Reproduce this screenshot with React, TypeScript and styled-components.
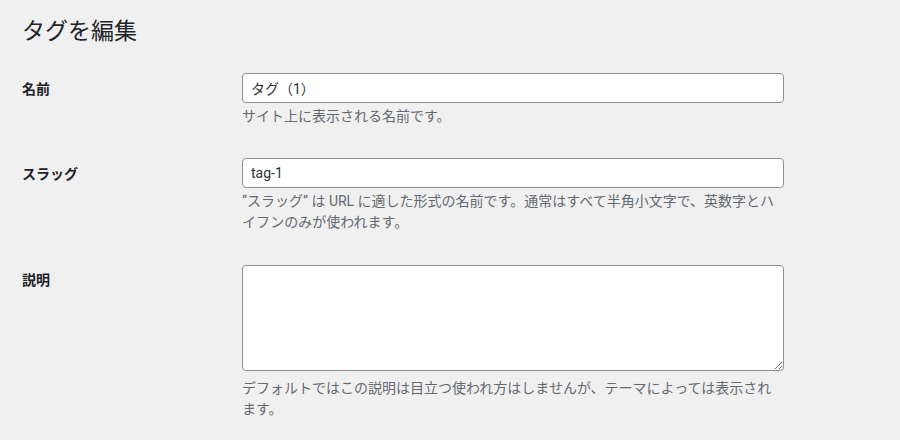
import React from "react";
import styled, { createGlobalStyle } from "styled-components";

const GlobalStyle = createGlobalStyle`
  html, body {
    margin: 0;
    padding: 0;
    background: #f0f0f1;
  }
  body {
    font-family: Roboto, "Noto Sans CJK JP", sans-serif;
    color: #3c434a;
    font-size: 13px;
  }
`;

const Wrap = styled.div`
  padding: 17px 20px 0 22px;
`;

const Title = styled.h1`
  margin: 0;
  font-size: 23px;
  font-weight: 400;
  line-height: 30px;
  color: #1d2327;
  font-family: Roboto, "Noto Sans CJK JP", sans-serif;
`;

const FormTable = styled.div`
  margin-top: 11px;
  display: flex;
  flex-direction: column;
`;

const Row = styled.div`
  display: grid;
  grid-template-columns: 210px 1fr;
  align-items: start;
`;

const Label = styled.label`
  display: block;
  padding: 22px 10px 0 0;
  font-size: 14px;
  line-height: 1.3;
  font-weight: 700;
  color: #1d2327;
`;

const Field = styled.div`
  padding: 15px 10px 16px 10px;
`;

const TextInput = styled.input`
  display: block;
  box-sizing: border-box;
  width: 542px;
  height: 30px;
  margin: 0;
  padding: 0 8px;
  border: 1px solid #8c8f94;
  border-radius: 4px;
  background: #fff;
  color: #2c3338;
  font-size: 14px;
  font-family: Roboto, "Noto Sans CJK JP", sans-serif;
  outline: none;
`;

const TextArea = styled.textarea`
  display: block;
  box-sizing: border-box;
  width: 542px;
  height: 106px;
  margin: 1px 0 7px 0;
  padding: 2px 6px;
  border: 1px solid #8c8f94;
  border-radius: 4px;
  background: #fff;
  color: #2c3338;
  font-size: 14px;
  font-family: Roboto, "Noto Sans CJK JP", sans-serif;
  outline: none;
`;

const Description = styled.p`
  margin: 3px 0 0 0;
  width: 543px;
  font-size: 14px;
  line-height: 21px;
  color: #646970;
`;

export default function App() {
  return (
    <>
      <GlobalStyle />
      <Wrap>
        <Title>タグを編集</Title>
        <FormTable>
          <Row>
            <Label htmlFor="name">名前</Label>
            <Field>
              <TextInput id="name" type="text" defaultValue="タグ（1）" />
              <Description>サイト上に表示される名前です。</Description>
            </Field>
          </Row>
          <Row>
            <Label htmlFor="slug">スラッグ</Label>
            <Field>
              <TextInput id="slug" type="text" defaultValue="tag-1" />
              <Description>
                “スラッグ” は URL に適した形式の名前です。通常はすべて半角小文字で、英数字とハイフンのみが使われます。
              </Description>
            </Field>
          </Row>
          <Row>
            <Label htmlFor="description">説明</Label>
            <Field>
              <TextArea id="description" rows={5} />
              <Description>
                デフォルトではこの説明は目立つ使われ方はしませんが、テーマによっては表示されます。
              </Description>
            </Field>
          </Row>
        </FormTable>
      </Wrap>
    </>
  );
}
